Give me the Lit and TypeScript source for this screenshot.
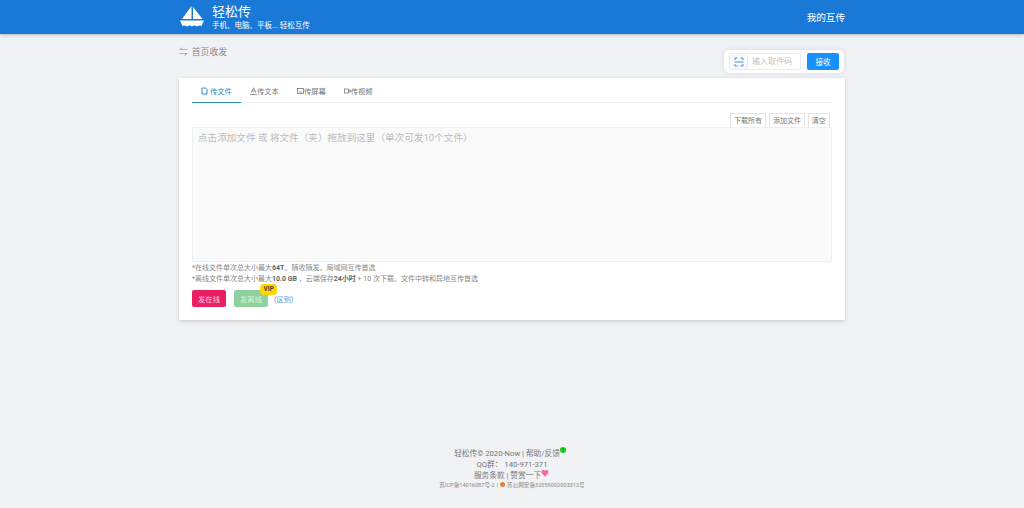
import { LitElement, html, css } from "lit";
import { customElement } from "lit/decorators.js";

@customElement("app-root")
export class AppRoot extends LitElement {
  static styles = css`
    :host { display: flex; flex-direction: column; height: 508px; overflow: hidden; background: #f0f2f5; color: #666;
      font-family: "Roboto", "Noto Sans CJK SC", sans-serif; font-size: 8px; }
    svg { display: block; flex: none; }
    .header { height: 34px; flex: none; background: #1a78d6; box-shadow: 0 1px 3px rgba(0,0,0,.25); color: #fff; display: flex; justify-content: center; }
    .wrap { width: 666px; display: flex; align-items: center; justify-content: space-between; }
    .brand { display: flex; align-items: center; gap: 8px; }
    .title { font-size: 13px; line-height: 15px; padding-top: 1px; }
    .sub { font-size: 7.5px; line-height: 10px; margin-top: 2px; }
    .mine { font-size: 9.6px; margin-bottom: 1px; }
    .main { width: 666px; margin: 0 auto; flex: none; }
    .top { height: 44px; display: flex; justify-content: space-between; align-items: flex-start; }
    .crumb { display: flex; align-items: center; gap: 4px; font-size: 8.8px; color: #888; margin-top: 12px; line-height: 13px; }
    .recv { margin-top: 16px; margin-right: 1px; width: 120px; height: 23px; box-sizing: border-box; background: #fff; border-radius: 5px; box-shadow: 0 0 4px rgba(0,0,0,.12); display: flex; align-items: center; padding: 0 5px; gap: 6px; }
    .input { width: 72px; height: 17px; box-sizing: border-box; border: 1px solid #e9ecf0; border-radius: 2px; display: flex; align-items: center; color: #c4c4c4; font-size: 8px; line-height: 13px; }
    .scan { width: 17px; height: 15px; border-right: 1px solid #e9ecf0; background: #f6f8fb; display: flex; align-items: center; justify-content: center; margin-right: 4px; flex: none; }
    .go { width: 32px; height: 17px; background: #1890ff; color: #fff; border-radius: 2px; font-size: 7.5px; display: flex; align-items: center; justify-content: center; }
    .card { height: 242px; box-sizing: border-box; background: #fff; box-shadow: 0 1px 4px rgba(0,0,0,.18); padding: 0 13px; }
    .tabs { height: 24px; border-bottom: 1px solid #eef0f2; display: flex; align-items: stretch; }
    .tab { display: flex; align-items: center; font-size: 7.3px; color: #777; margin-right: 18px; box-sizing: border-box; padding-top: 2px; }
    .tab.on { color: #2d8cc8; border-bottom: 1px solid #2d8cc8; width: 49px; padding-left: 9px; gap: 2px; margin-bottom: -1px; margin-right: 9px; }
    .acts { display: flex; justify-content: flex-end; gap: 2.5px; height: 14px; margin-top: 10px; padding-right: 2px; }
    .act { height: 14px; box-sizing: border-box; border: 1px solid #e6e6e6; border-bottom: 0; padding: 0 3.2px; font-size: 7px; line-height: 14px; color: #777; }
    .drop { height: 135px; box-sizing: border-box; background: #fafafa; border: 1px solid #eceef0; border-radius: 2px; font-size: 9.6px; line-height: 16px; color: #bcbcbc; padding: 2px 5px; }
    .note { font-size: 7px; line-height: 11px; color: #888; }
    .notes { margin-top: 1px; }
    .note b { color: #666; font-weight: 700; }
    .btns { display: flex; align-items: center; margin-top: 5px; }
    .btn { height: 17px; width: 34px; border-radius: 2px; color: #f7d4e0; font-size: 7.3px; display: flex; align-items: center; justify-content: center; }
    .pink { background: #e91e63; margin-right: 8px; }
    .green { background: #8fd19e; position: relative; margin-right: 6px; color: #d8f2de; }
    .vip { position: absolute; top: -6px; left: 26px; background: #ffd600; color: #444; font-size: 6.5px; font-weight: 700; line-height: 11px; padding: 0 3.5px; border-radius: 4px; }
    .link { color: #5a9bdc; font-size: 7.3px; }
    .foot { margin-top: 127px; display: flex; flex-direction: column; align-items: center; font-size: 7.7px; color: #777; }
    .line { height: 11.5px; line-height: 11.5px; }
    .l1 { margin-right: 4px; }
    .l3 { margin-right: 2px; }
    .badge { display: inline-block; width: 6px; height: 6px; border-radius: 50%; background: #14d414; vertical-align: 3px; line-height: 6px; font-size: 5px; text-align: center; color: #0a6a0a; overflow: hidden; }
    .heart { display: inline-block; color: #f06a9b; font-size: 8px; line-height: 8px; width: 7px; vertical-align: 2px; }
    .small { font-size: 5.6px; height: 10px; line-height: 10px; color: #888; display: flex; align-items: center; gap: 2px; margin-top: -2px; }
    .emblem { width: 5px; height: 5px; border-radius: 50%; background: #e2803a; }
  `;

  render() {
    return html`
      <div class="header"><div class="wrap">
        <div class="brand">
          <svg width="25" height="22" viewBox="0 0 25 22" fill="#fff">
            <path d="M12.5 0 V13 H3 Z"/><path d="M14 1 L23.5 13 H14 Z"/>
            <path d="M1 14.5 H25 L22.5 20 Q20 18.7 18 20.5 Q15.5 18.7 13 20.5 Q10.5 18.7 8 20.5 Q6 18.7 3.5 20 Z"/>
          </svg>
          <div><div class="title">轻松传</div><div class="sub">手机、电脑、平板... 轻松互传</div></div>
        </div>
        <div class="mine">我的互传</div>
      </div></div>
      <div class="main">
        <div class="top">
          <div class="crumb"><span>⇋</span><span>首页收发</span></div>
          <div class="recv">
            <div class="input">
              <div class="scan"><svg width="10" height="10" viewBox="0 0 10 10" fill="none" stroke="#3f86c9" stroke-width=".9"><path d="M1 3V1H3.5M6.5 1H9V3M1 7V9H3.5M6.5 9H9V7M0.5 5H9.5"/></svg></div>
              输入取件码
            </div>
            <div class="go">接收</div>
          </div>
        </div>
        <div class="card">
          <div class="tabs">
            <div class="tab on"><svg width="7" height="8" viewBox="0 0 7 8" fill="none" stroke="#2d8cc8"><path d="M1 1H4.5L6 2.5V7H1Z"/></svg>传文件</div>
            <div class="tab"><svg width="7" height="8" viewBox="0 0 7 8" fill="none" stroke="#777" stroke-width=".8"><path d="M1.2 5.6L3.5 .8L5.8 5.6M2.2 4H4.8M0.2 7.5H6.8"/></svg>传文本</div>
            <div class="tab"><svg width="7" height="8" viewBox="0 0 7 8" fill="none" stroke="#777" stroke-width=".8"><rect x=".5" y="1.5" width="6" height="5"/><path d="M2 5H5"/></svg>传屏幕</div>
            <div class="tab"><svg width="7" height="8" viewBox="0 0 7 8" fill="none" stroke="#777" stroke-width=".8"><rect x=".5" y="2" width="4" height="4"/><path d="M4.8 3.5L6.6 2.8V5.2L4.8 4.5"/></svg>传视频</div>
          </div>
          <div class="acts"><div class="act">下载所有</div><div class="act">添加文件</div><div class="act">清空</div></div>
          <div class="drop">点击添加文件 或 将文件（夹）拖放到这里（单次可发10个文件）</div>
          <div class="notes">
            <div class="note">*在线文件单次总大小最大<b>64T</b>、随收随发、局域网互传首选</div>
            <div class="note">*离线文件单次总大小最大<b>10.0 GB</b> ，云端保存<b>24小时</b> + 10 次下载、文件中转和异地互传首选</div>
          </div>
          <div class="btns">
            <div class="btn pink">发在线</div>
            <div class="btn green">发离线<span class="vip">VIP</span></div>
            <div class="link">(区别)</div>
          </div>
        </div>
        <div class="foot">
          <div class="line l1">轻松传© 2020-Now | 帮助/反馈<span class="badge">?</span></div>
          <div class="line">QQ群： 140-971-371</div>
          <div class="line l3">服务条款 | 赞赏一下<span class="heart">♥</span></div>
          <div class="small"><span>苏ICP备14016087号-2</span><span>|</span><span class="emblem"></span><span>苏公网安备32059002003312号</span></div>
        </div>
      </div>
    `;
  }
}
